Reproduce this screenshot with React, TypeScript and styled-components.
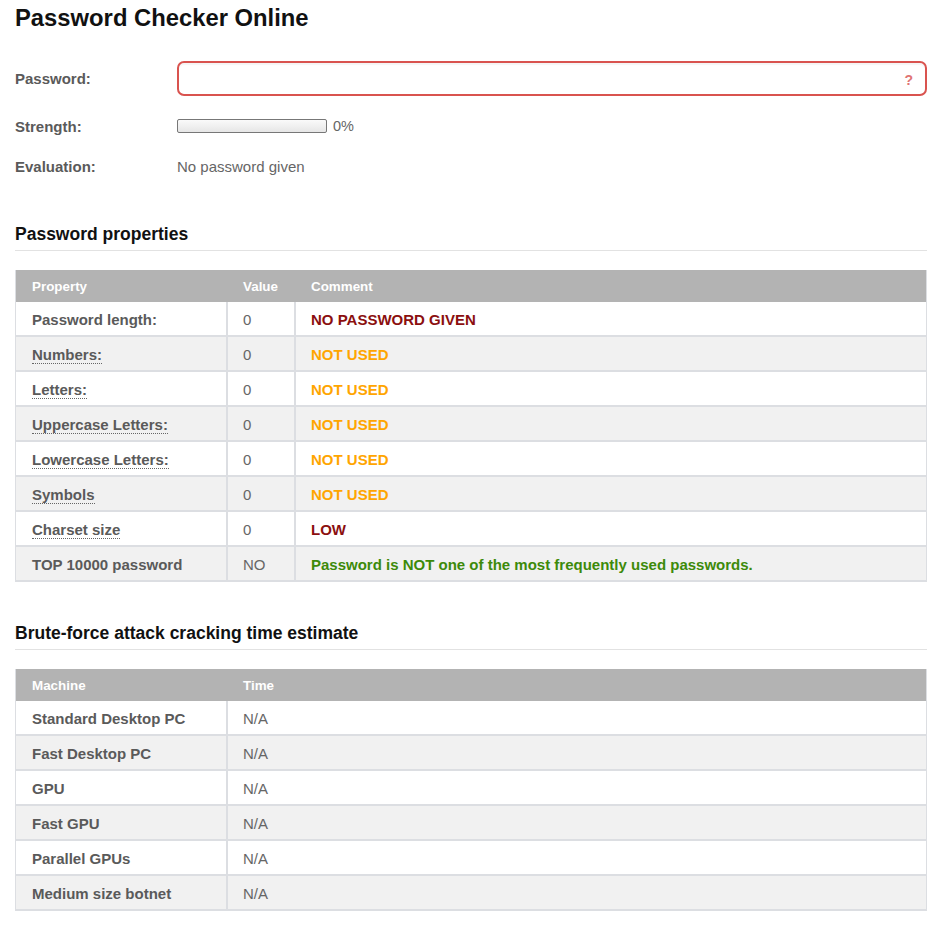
import styled, { createGlobalStyle } from 'styled-components';

type Tone = 'danger' | 'warn' | 'ok';

interface PropertyRow {
    name: string;
    hint?: boolean;
    value: string;
    comment: string;
    tone: Tone;
}

const properties: PropertyRow[] = [
    { name: 'Password length:', value: '0', comment: 'NO PASSWORD GIVEN', tone: 'danger' },
    { name: 'Numbers:', hint: true, value: '0', comment: 'NOT USED', tone: 'warn' },
    { name: 'Letters:', hint: true, value: '0', comment: 'NOT USED', tone: 'warn' },
    { name: 'Uppercase Letters:', hint: true, value: '0', comment: 'NOT USED', tone: 'warn' },
    { name: 'Lowercase Letters:', hint: true, value: '0', comment: 'NOT USED', tone: 'warn' },
    { name: 'Symbols', hint: true, value: '0', comment: 'NOT USED', tone: 'warn' },
    { name: 'Charset size', hint: true, value: '0', comment: 'LOW', tone: 'danger' },
    {
        name: 'TOP 10000 password',
        value: 'NO',
        comment: 'Password is NOT one of the most frequently used passwords.',
        tone: 'ok',
    },
];

const machines = [
    'Standard Desktop PC',
    'Fast Desktop PC',
    'GPU',
    'Fast GPU',
    'Parallel GPUs',
    'Medium size botnet',
];

const toneColors: Record<Tone, string> = {
    danger: '#8b0f0f',
    warn: '#ffa500',
    ok: '#3d8a0a',
};

const GlobalStyle = createGlobalStyle`
    body {
        margin: 0;
        background: #fff;
        font-family: 'Liberation Sans', Arial, sans-serif;
    }
`;

export default function App() {
    const strength = 0;

    return (
        <>
            <GlobalStyle />
            <StyledPage>
                <StyledTitle>Password Checker Online</StyledTitle>

                <StyledForm>
                    <StyledLabel>Password:</StyledLabel>
                    <StyledInputWrap>
                        <StyledInput type="password" />
                        <StyledHelp>?</StyledHelp>
                    </StyledInputWrap>

                    <StyledLabel>Strength:</StyledLabel>
                    <StyledMeterRow>
                        <StyledMeter>
                            <StyledMeterFill style={{ width: `${strength}%` }} />
                        </StyledMeter>
                        <span>{strength}%</span>
                    </StyledMeterRow>

                    <StyledLabel>Evaluation:</StyledLabel>
                    <StyledValue>No password given</StyledValue>
                </StyledForm>

                <StyledSectionTitle>Password properties</StyledSectionTitle>
                <StyledTable>
                    <colgroup>
                        <col style={{ width: 212 }} />
                        <col style={{ width: 68 }} />
                        <col />
                    </colgroup>
                    <thead>
                        <tr>
                            <StyledTh>Property</StyledTh>
                            <StyledTh>Value</StyledTh>
                            <StyledTh>Comment</StyledTh>
                        </tr>
                    </thead>
                    <tbody>
                        {properties.map((row) => (
                            <StyledTr key={row.name}>
                                <StyledNameCell>
                                    {row.hint ? <StyledHint>{row.name}</StyledHint> : row.name}
                                </StyledNameCell>
                                <StyledCell>{row.value}</StyledCell>
                                <StyledCommentCell $tone={row.tone}>{row.comment}</StyledCommentCell>
                            </StyledTr>
                        ))}
                    </tbody>
                </StyledTable>

                <StyledSectionTitle>Brute-force attack cracking time estimate</StyledSectionTitle>
                <StyledTable>
                    <colgroup>
                        <col style={{ width: 212 }} />
                        <col />
                    </colgroup>
                    <thead>
                        <tr>
                            <StyledTh>Machine</StyledTh>
                            <StyledTh>Time</StyledTh>
                        </tr>
                    </thead>
                    <tbody>
                        {machines.map((name) => (
                            <StyledTr key={name}>
                                <StyledNameCell>{name}</StyledNameCell>
                                <StyledCell>N/A</StyledCell>
                            </StyledTr>
                        ))}
                    </tbody>
                </StyledTable>
            </StyledPage>
        </>
    );
}

const StyledPage = styled.div`
    width: 912px;
    padding: 4px 12px 24px 15px;
    color: #666;
    font-size: 15px;
`;

const StyledTitle = styled.h1`
    margin: 0;
    font-size: 23.8px;
    line-height: 28px;
    font-weight: 700;
    color: #111;
`;

const StyledForm = styled.div`
    display: grid;
    grid-template-columns: 162px 1fr;
    grid-template-rows: 35px 20px 20px;
    row-gap: 20px;
    align-items: center;
    margin-top: 29px;
`;

const StyledLabel = styled.div`
    font-weight: 700;
    color: #5a5a5a;
`;

const StyledValue = styled.div`
    color: #666;
    padding-top: 1px;
`;

const StyledInputWrap = styled.div`
    position: relative;
    height: 35px;
`;

const StyledInput = styled.input`
    box-sizing: border-box;
    width: 100%;
    height: 100%;
    margin: 0;
    padding: 0 30px 0 10px;
    border: 2px solid #d9534f;
    border-radius: 7px;
    background: #fff;
    box-shadow: inset 0 2px 1px rgba(0, 0, 0, 0.04);
    font: inherit;
    outline: none;
`;

const StyledHelp = styled.span`
    position: absolute;
    right: 14px;
    top: 50%;
    transform: translateY(-46%);
    font-weight: 700;
    font-size: 14px;
    color: #e07474;
`;

const StyledMeterRow = styled.div`
    display: flex;
    align-items: center;
    gap: 6px;
    color: #666;
    font-size: 14.5px;
`;

const StyledMeter = styled.div`
    box-sizing: border-box;
    width: 150px;
    height: 14px;
    border: 1px solid #777;
    border-radius: 2px;
    background: linear-gradient(to bottom, #fafafa, #e6e6e6);
    overflow: hidden;
`;

const StyledMeterFill = styled.div`
    height: 100%;
    background: #5cb85c;
`;

const StyledSectionTitle = styled.h2`
    margin: 48px 0 0;
    padding-bottom: 6px;
    border-bottom: 1px solid #e2e2e2;
    font-size: 17.5px;
    line-height: 20px;
    font-weight: 700;
    color: #111;

    & + table {
        margin-top: 19px;
    }
`;

const StyledTable = styled.table`
    width: 100%;
    table-layout: fixed;
    border-collapse: separate;
    border-spacing: 0;
    border-left: 1px solid #dcdee2;
    border-right: 1px solid #dcdee2;

    & + h2 {
        margin-top: 41px;
    }
`;

const StyledTh = styled.th`
    height: 32px;
    padding: 0 16px;
    background: #b3b3b3;
    color: #fff;
    font-size: 13.4px;
    font-weight: 700;
    text-align: left;

    &:not(:first-child) {
        padding-left: 15px;
    }
`;

const StyledTr = styled.tr`
    &:nth-child(odd) td {
        background: #fff;
    }

    &:nth-child(even) td {
        background: #f1f1f1;
    }
`;

const StyledCell = styled.td`
    box-sizing: border-box;
    height: 35px;
    padding: 2px 14px 0 15px;
    border-bottom: 2px solid #dcdee2;
    color: #666;

    &:not(:last-child) {
        border-right: 2px solid #dcdee2;
    }
`;

const StyledNameCell = styled(StyledCell)`
    padding-left: 16px;
    font-weight: 700;
    color: #5a5a5a;
`;

const StyledCommentCell = styled(StyledCell)<{ $tone: Tone }>`
    font-weight: 700;
    color: ${({ $tone }) => toneColors[$tone]};
`;

const StyledHint = styled.abbr`
    text-decoration: none;
    border-bottom: 1px dotted #666;
    cursor: help;
`;
